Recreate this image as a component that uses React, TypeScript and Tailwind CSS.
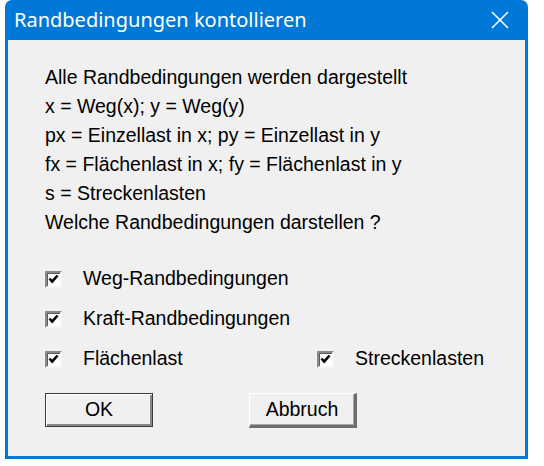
import React from 'react';

const lines = [
  'Alle Randbedingungen werden dargestellt',
  'x = Weg(x); y = Weg(y)',
  'px = Einzellast in x; py = Einzellast in y',
  'fx = Flächenlast in x; fy = Flächenlast in y',
  's = Streckenlasten',
  'Welche Randbedingungen darstellen ?',
];

function CheckBox({ label }: { label: string }) {
  return (
    <label className="flex items-center">
      <span className="w-[17px] h-[17px] bg-white border-t-2 border-l-2 border-t-[#8a8a8a] border-l-[#8a8a8a] border-b-2 border-r-2 border-b-[#f7f7f7] border-r-[#f7f7f7] shadow-[inset_1px_1px_0_#5a5a5a] flex items-center justify-center">
        <svg width="11" height="10" viewBox="0 0 11 10">
          <path d="M1.5 4.5 L4.2 7.5 L9.5 1.5" fill="none" stroke="#000" strokeWidth="2.6" />
        </svg>
      </span>
      <span className="ml-[21px]">{label}</span>
    </label>
  );
}

export default function App() {
  return (
    <div className="w-[544px] h-[466px] bg-white pl-[5px] font-['Liberation_Sans',Arial,sans-serif] text-black">
      <div className="w-[523px] h-[459px] flex flex-col">
        <div className="h-[40px] shrink-0 bg-[#0078d7] rounded-t-[7px] flex items-center justify-between pl-[9px] pr-[19px]">
          <span className="text-white text-[20px] font-['Noto_Sans',sans-serif]">Randbedingungen kontollieren</span>
          <svg width="18" height="18" viewBox="0 0 18 18">
            <path d="M1 1 L17 17 M17 1 L1 17" stroke="#fff" strokeWidth="1.6" />
          </svg>
        </div>
        <div className="flex-1 bg-[#f0f0f0] border-x-[3px] border-b-[3px] border-[#0078d7] pl-[37px] pt-[23px] text-[19.5px]">
          <div className="leading-[29px]">
            {lines.map(l => (
              <div key={l}>{l}</div>
            ))}
          </div>
          <div className="mt-[22px] flex flex-col">
            <div className="h-[40px] flex items-center">
              <CheckBox label="Weg-Randbedingungen" />
            </div>
            <div className="h-[40px] flex items-center">
              <CheckBox label="Kraft-Randbedingungen" />
            </div>
            <div className="h-[40px] flex items-center">
              <div className="w-[272px]">
                <CheckBox label="Flächenlast" />
              </div>
              <CheckBox label="Streckenlasten" />
            </div>
          </div>
          <div className="mt-[14px] flex gap-[96px]">
            <button className="w-[108px] h-[34px] bg-[#f0f0f0] border border-[#3c3c3c] shadow-[inset_1px_1px_0_#ffffff,inset_-2px_-2px_0_#8a8a8a] leading-none">
              OK
            </button>
            <button className="w-[108px] h-[35px] bg-[#f0f0f0] border-t border-l border-t-white border-l-white border-b-[3px] border-r-[3px] border-b-[#6e6e6e] border-r-[#6e6e6e] shadow-[inset_-1px_-1px_0_#a8a8a8] leading-none">
              Abbruch
            </button>
          </div>
        </div>
      </div>
    </div>
  );
}
